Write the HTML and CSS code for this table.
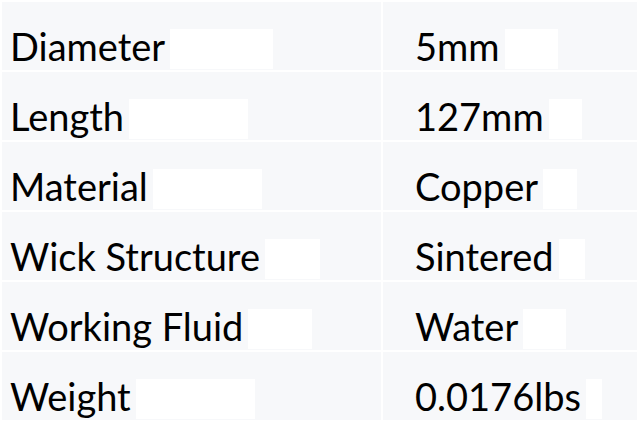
FILE: index.html
```html
<!DOCTYPE html>
<html>
<head>
<meta charset="utf-8">
<link rel="stylesheet" href="styles.css">
</head>
<body>
<div class="specs">
  <div class="cell key">Diameter<span class="hl" style="width:103px"></span></div>
  <div class="cell val">5mm<span class="hl" style="width:53px"></span></div>
  <div class="cell key">Length<span class="hl" style="width:119px"></span></div>
  <div class="cell val">127mm<span class="hl" style="width:33px"></span></div>
  <div class="cell key">Material<span class="hl" style="width:109px"></span></div>
  <div class="cell val">Copper<span class="hl" style="width:34px"></span></div>
  <div class="cell key">Wick Structure<span class="hl" style="width:55px"></span></div>
  <div class="cell val">Sintered<span class="hl" style="width:26px"></span></div>
  <div class="cell key">Working Fluid<span class="hl" style="width:64px"></span></div>
  <div class="cell val">Water<span class="hl" style="width:43px"></span></div>
  <div class="cell key">Weight<span class="hl" style="width:119px"></span></div>
  <div class="cell val">0.0176lbs<span class="hl" style="width:16px"></span></div>
</div>
</body>
</html>
```

FILE: styles.css
```css
html, body {
  margin: 0;
  padding: 0;
  background: #ffffff;
}

.specs {
  display: grid;
  grid-template-columns: 379px 254px;
  grid-auto-rows: 68px;
  gap: 2px;
  padding: 2px;
  font-family: Lato, "Open Sans", sans-serif;
  font-size: 38px;
  line-height: 38px;
  color: #000;
}

.cell {
  background: #f7f8fa;
  padding-top: 25px;
  white-space: nowrap;
  overflow: hidden;
}

.key {
  padding-left: 8px;
}

.val {
  padding-left: 32px;
}

.hl {
  display: inline-block;
  height: 40px;
  margin-left: 5px;
  vertical-align: -8px;
  background: #ffffff;
}
```
